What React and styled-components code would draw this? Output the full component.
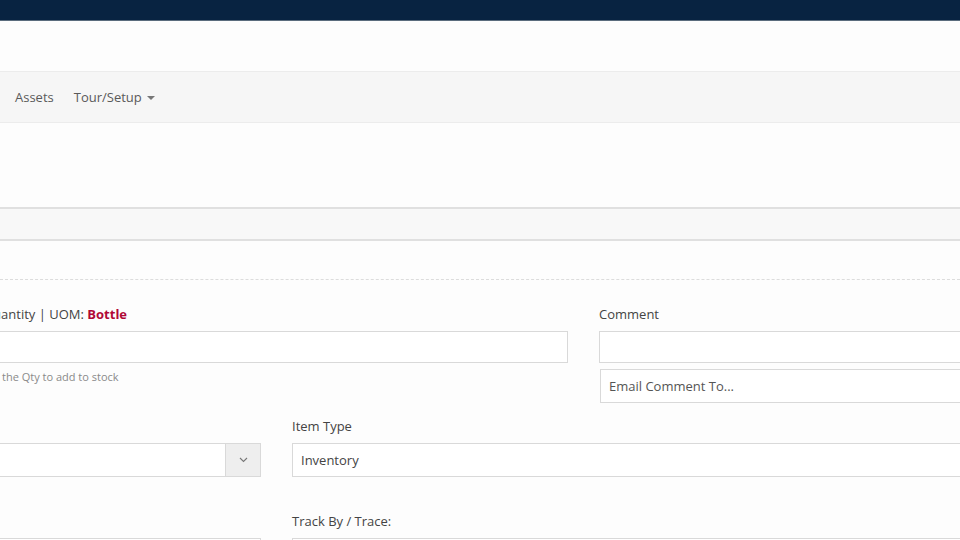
import React from "react";
import styled, { createGlobalStyle } from "styled-components";

const Global = createGlobalStyle`
  html, body { margin: 0; padding: 0; background: #fdfdfd; overflow: hidden; }
  body { font-family: "Open Sans", "Liberation Sans", sans-serif; color: #444; }
  * { box-sizing: border-box; }
`;

const TopBar = styled.div`
  height: 21px;
  background: #082341;
  border-bottom: 1px solid #5b6c7d;
`;

const Header = styled.div`
  height: 50px;
  background: #fdfdfd;
`;

const NavBar = styled.nav`
  height: 52px;
  background: #f6f6f6;
  border-top: 1px solid #ececec;
  border-bottom: 1px solid #ececec;
  display: flex;
  align-items: center;
  padding-left: 15px;
  gap: 20px;
`;

const NavItem = styled.span`
  font-size: 13px;
  color: #5a5a5a;
  display: inline-flex;
  align-items: center;
  gap: 5px;
  line-height: 18px;
`;

const Caret = styled.span`
  width: 0;
  height: 0;
  border-left: 4px solid transparent;
  border-right: 4px solid transparent;
  border-top: 4px solid #777;
  margin-top: 1px;
`;

const Spacer = styled.div`
  height: ${(p) => p.h}px;
`;

const Band = styled.div`
  height: 34px;
  background: #f8f8f8;
  border-top: 2px solid #e0e0e0;
  border-bottom: 2px solid #e0e0e0;
`;

const Dashed = styled.div`
  border-top: 1px dashed #dcdcdc;
`;

const Form = styled.div`
  margin-left: -17px;
  padding-top: 25px;
`;

const Row = styled.div`
  display: grid;
  grid-template-columns: ${(p) => p.cols};
  column-gap: 31px;
  margin-top: ${(p) => p.mt || 0}px;
`;

const Field = styled.div`
  display: flex;
  flex-direction: column;
  min-width: 0;
`;

const Label = styled.label`
  font-size: 13px;
  line-height: 18px;
  height: 18px;
  color: #444;
  margin-bottom: 8px;
  white-space: nowrap;
`;

const Strong = styled.b`
  color: #b00837;
  font-weight: 700;
`;

const Input = styled.div`
  height: ${(p) => p.h || 32}px;
  border: 1px solid #d9d9d9;
  background: #fff;
  font-size: 13px;
  color: ${(p) => p.color || "#444"};
  display: flex;
  align-items: center;
  padding-left: 8px;
  margin-left: ${(p) => p.ml || 0}px;
  margin-top: ${(p) => p.mt || 0}px;
  white-space: nowrap;
`;

const Help = styled.div`
  font-size: 11px;
  line-height: 15px;
  color: #8a8a8a;
  margin-top: 6px;
  white-space: nowrap;
`;

const SelectGroup = styled.div`
  display: flex;
  height: 34px;
  border: 1px solid #d9d9d9;
  background: #fff;
`;

const SelectBody = styled.div`
  flex: 1;
`;

const Addon = styled.div`
  width: 35px;
  background: #eeeeee;
  border-left: 1px solid #d9d9d9;
  display: flex;
  align-items: center;
  justify-content: center;
`;

const Page = styled.div`
  width: 960px;
  height: 540px;
  overflow: hidden;
`;

export default function App() {
  return (
    <Page>
      <Global />
      <TopBar />
      <Header />
      <NavBar>
        <NavItem>Assets</NavItem>
        <NavItem>
          Tour/Setup <Caret />
        </NavItem>
      </NavBar>
      <Spacer h={84} />
      <Band />
      <Spacer h={38} />
      <Dashed />
      <Form>
        <Row cols="585px 585px">
          <Field>
            <Label>
              Quantity | UOM: <Strong>Bottle</Strong>
            </Label>
            <Input h={32} />
            <Help>Set the Qty to add to stock</Help>
          </Field>
          <Field>
            <Label>Comment</Label>
            <Input h={32} />
            <Input h={34} ml={1} mt={6} color="#555">
              Email Comment To...
            </Input>
          </Field>
        </Row>
        <Row cols="278px 700px" mt={14}>
          <Field>
            <Label />
            <SelectGroup>
              <SelectBody />
              <Addon>
                <svg width="9" height="6" viewBox="0 0 9 6">
                  <path d="M1 1 L4.5 4.5 L8 1" fill="none" stroke="#777" strokeWidth="1.1" />
                </svg>
              </Addon>
            </SelectGroup>
          </Field>
          <Field>
            <Label>Item Type</Label>
            <Input h={34}>Inventory</Input>
          </Field>
        </Row>
        <Row cols="278px 700px" mt={35}>
          <Field>
            <Label />
            <Input h={34} />
          </Field>
          <Field>
            <Label>Track By / Trace:</Label>
            <Input h={34} />
          </Field>
        </Row>
      </Form>
    </Page>
  );
}
